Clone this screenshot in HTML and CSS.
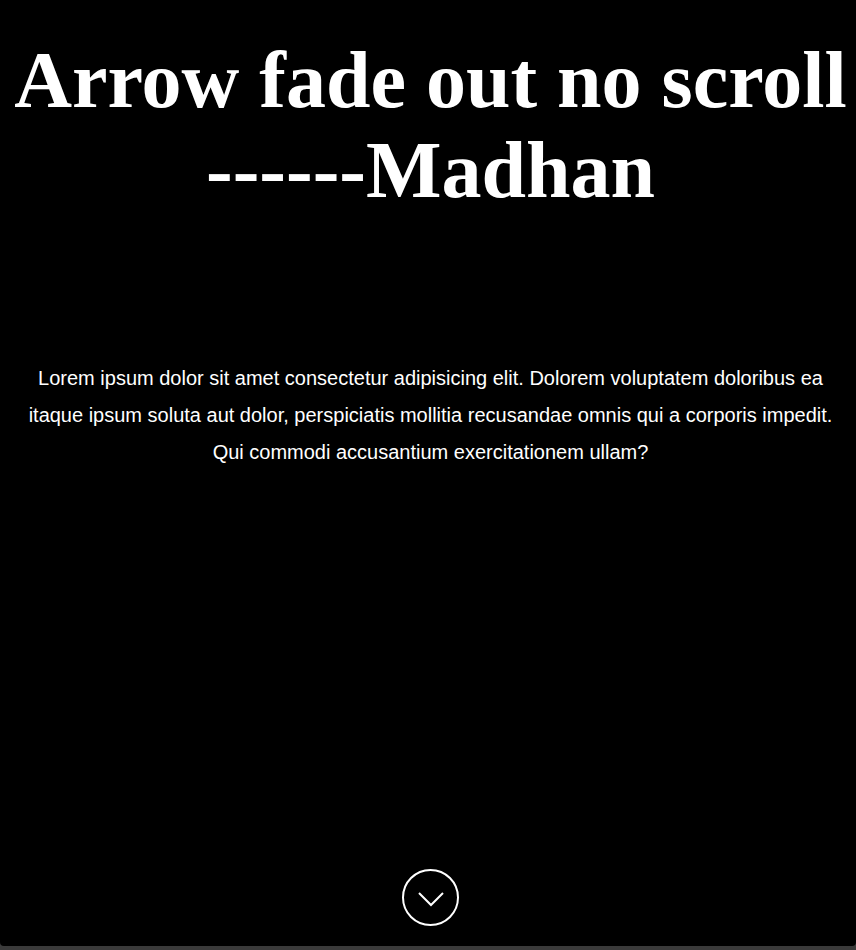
FILE: index.html
```html
<!DOCTYPE html>
<html>
<head>
<meta charset="utf-8">
<link rel="stylesheet" href="styles.css">
</head>
<body>
<main class="page">
  <h1 class="title">Arrow fade out no scroll ------Madhan</h1>
  <p class="text">Lorem ipsum dolor sit amet consectetur adipisicing elit. Dolorem voluptatem doloribus ea itaque ipsum soluta aut dolor, perspiciatis mollitia recusandae omnis qui a corporis impedit. Qui commodi accusantium exercitationem ullam?</p>
  <div class="arrow-wrap">
    <div class="arrow">
      <svg width="28" height="16" viewBox="0 0 28 16"><path d="M2 2 L14 14 L26 2" fill="none" stroke="#fff" stroke-width="2"/></svg>
    </div>
  </div>
</main>
<div class="bar"></div>
</body>
</html>
```
FILE: styles.css
```css
html, body {
  margin: 0;
  padding: 0;
  background: #3a3a3a;
}
.page {
  background: #000;
  height: 946px;
  padding-left: 5px;
  box-sizing: border-box;
  border-bottom-left-radius: 4px;
  border-bottom-right-radius: 4px;
  display: flex;
  flex-direction: column;
  align-items: center;
  color: #fff;
  overflow: hidden;
}
.title {
  margin: 35px 0 0;
  font-family: "Liberation Serif", "Times New Roman", serif;
  font-weight: bold;
  font-size: 80px;
  line-height: 90px;
  text-align: center;
}
.text {
  margin: 145px 18px 0;
  font-family: "Liberation Sans", Arial, sans-serif;
  font-size: 20px;
  line-height: 37px;
  text-align: center;
}
.arrow-wrap {
  margin-top: auto;
  padding-bottom: 20px;
}
.arrow {
  width: 53px;
  height: 53px;
  border: 2px solid #fff;
  border-radius: 50%;
  display: flex;
  align-items: center;
  justify-content: center;
}
.arrow svg {
  display: block;
  margin-top: 2px;
}
.bar {
  height: 4px;
}
```
